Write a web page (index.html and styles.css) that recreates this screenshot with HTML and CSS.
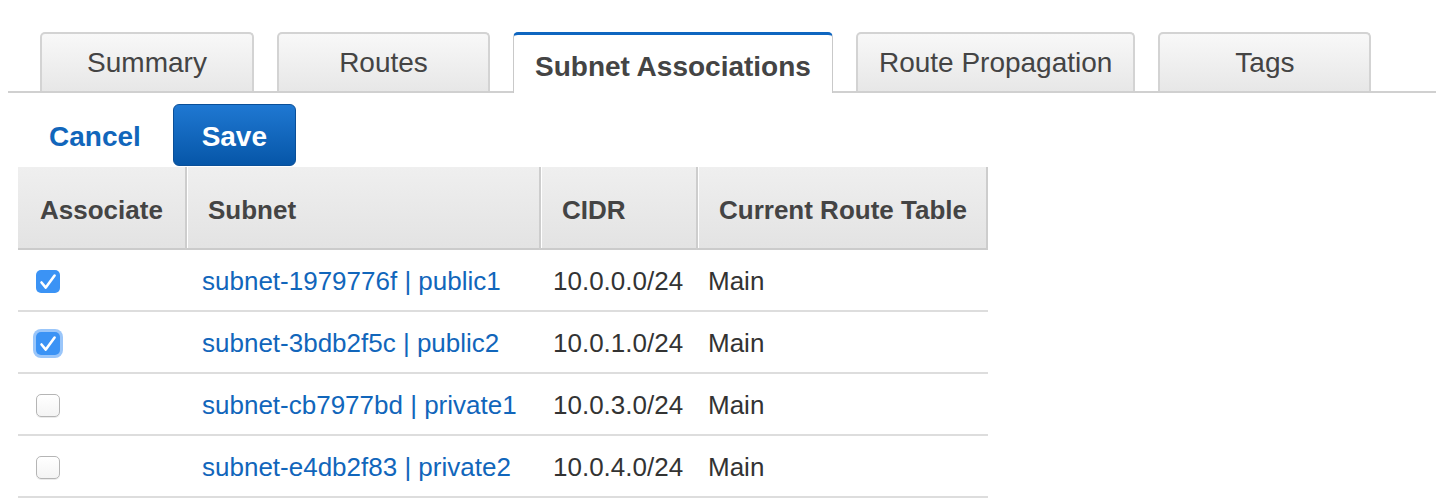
FILE: index.html
```html
<!DOCTYPE html>
<html lang="en">
<head>
<meta charset="utf-8">
<title>Subnet Associations</title>
<link rel="stylesheet" href="styles.css">
</head>
<body>
<div class="page">
  <nav class="tabs">
    <div class="tab">Summary</div>
    <div class="tab">Routes</div>
    <div class="tab active">Subnet Associations</div>
    <div class="tab">Route Propagation</div>
    <div class="tab">Tags</div>
  </nav>

  <div class="actions">
    <a class="cancel" href="#">Cancel</a>
    <button class="save" type="button">Save</button>
  </div>

  <table class="grid">
    <colgroup>
      <col class="c-assoc">
      <col class="c-subnet">
      <col class="c-cidr">
      <col class="c-rt">
    </colgroup>
    <thead>
      <tr>
        <th>Associate</th>
        <th>Subnet</th>
        <th>CIDR</th>
        <th>Current Route Table</th>
      </tr>
    </thead>
    <tbody>
      <tr>
        <td class="cell-cb"><span class="cb checked"><svg viewBox="0 0 24 23" width="24" height="23"><path d="M5.5 12.5 L9.8 17.6 L18.6 5.6" fill="none" stroke="#fff" stroke-width="2.6" stroke-linecap="round" stroke-linejoin="round"/></svg></span></td>
        <td class="cell-subnet"><a href="#">subnet-1979776f | public1</a></td>
        <td class="cell-cidr">10.0.0.0/24</td>
        <td class="cell-rt">Main</td>
      </tr>
      <tr>
        <td class="cell-cb"><span class="cb checked focused"><svg viewBox="0 0 24 23" width="24" height="23"><path d="M5.5 12.5 L9.8 17.6 L18.6 5.6" fill="none" stroke="#fff" stroke-width="2.6" stroke-linecap="round" stroke-linejoin="round"/></svg></span></td>
        <td class="cell-subnet"><a href="#">subnet-3bdb2f5c | public2</a></td>
        <td class="cell-cidr">10.0.1.0/24</td>
        <td class="cell-rt">Main</td>
      </tr>
      <tr>
        <td class="cell-cb"><span class="cb"></span></td>
        <td class="cell-subnet"><a href="#">subnet-cb7977bd | private1</a></td>
        <td class="cell-cidr">10.0.3.0/24</td>
        <td class="cell-rt">Main</td>
      </tr>
      <tr>
        <td class="cell-cb"><span class="cb"></span></td>
        <td class="cell-subnet"><a href="#">subnet-e4db2f83 | private2</a></td>
        <td class="cell-cidr">10.0.4.0/24</td>
        <td class="cell-rt">Main</td>
      </tr>
    </tbody>
  </table>
</div>
</body>
</html>
```

FILE: styles.css
```css
* { box-sizing: border-box; }

html, body {
  margin: 0;
  padding: 0;
  background: #ffffff;
}

body {
  font-family: "Liberation Sans", Arial, Helvetica, sans-serif;
  color: #444444;
}

.page {
  padding-left: 8px;
}

/* Tabs */
.tabs {
  display: flex;
  align-items: flex-end;
  gap: 23px;
  padding: 32px 0 0 32px;
  border-bottom: 2px solid #d0d0d0;
}

.tab {
  height: 59px;
  min-width: 213px;
  padding: 0 21px;
  display: flex;
  align-items: center;
  justify-content: center;
  font-size: 28px;
  color: #444444;
  background: linear-gradient(#f8f8f8, #e7e7e7);
  border: 2px solid #d3d3d3;
  border-bottom: none;
  border-radius: 5px 5px 0 0;
  white-space: nowrap;
}

.tab:first-child {
  min-width: 214px;
}

.tab.active {
  height: 61px;
  margin-bottom: -2px;
  padding: 5px 21px 0;
  background: #ffffff;
  border: 1px solid #c9c9c9;
  border-top: 3px solid #0f66c0;
  border-bottom: none;
  font-weight: bold;
  color: #444444;
}

/* Actions */
.actions {
  display: flex;
  align-items: center;
  padding-left: 41px;
  margin-top: 11px;
  height: 62px;
}

.cancel {
  font-size: 28px;
  font-weight: bold;
  color: #1166bb;
  text-decoration: none;
  margin-right: 32px;
  padding-top: 4px;
}

.save {
  width: 123px;
  height: 62px;
  border: 1px solid #0a4f98;
  border-radius: 6px;
  background: linear-gradient(#1f78d2, #0656a8);
  color: #ffffff;
  font-family: inherit;
  font-size: 28px;
  font-weight: bold;
  padding: 4px 0 0;
  margin-top: 0;
}

/* Table */
.grid {
  margin: 1px 0 0 10px;
  width: 970px;
  table-layout: fixed;
  border-collapse: separate;
  border-spacing: 0;
}

.c-assoc { width: 167px; }
.c-subnet { width: 354px; }
.c-cidr { width: 157px; }
.c-rt { width: 292px; }

.grid th {
  height: 83px;
  padding: 5px 0 0 22px;
  text-align: left;
  font-size: 26px;
  font-weight: bold;
  color: #444444;
  background: linear-gradient(#efefef, #e3e3e3);
  border-bottom: 2px solid #cbcbcb;
  white-space: nowrap;
}

.grid th + th {
  border-left: 2px solid #cdcdcd;
  box-shadow: inset 1px 0 0 #ffffff;
  padding-left: 21px;
}

.grid th:last-child {
  border-right: 2px solid #cdcdcd;
}

.grid td {
  height: 62px;
  padding: 2px 0 0;
  font-size: 26px;
  color: #333333;
  border-bottom: 2px solid #dddddd;
  white-space: nowrap;
  vertical-align: middle;
}

.cell-cb { padding-left: 18px !important; }
.cell-subnet { padding-left: 17px !important; }
.cell-cidr { padding-left: 14px !important; }
.cell-rt { padding-left: 12px !important; }

.cell-subnet a {
  color: #1166bb;
  text-decoration: none;
}

.cb {
  display: block;
  width: 24px;
  height: 23px;
  border-radius: 5px;
  border: 1px solid #b5b5b5;
  background: linear-gradient(#ffffff, #f4f4f4);
  box-shadow: 0 1px 0 rgba(0, 0, 0, 0.08);
}

.cb svg { display: block; margin: -1px; }

.cb.checked {
  border: none;
  background: #3b93f5;
  box-shadow: none;
}

.cb.checked svg { margin: 0; }

.cb.focused {
  box-shadow: 0 0 0 3px #9ac6fa;
}
```
